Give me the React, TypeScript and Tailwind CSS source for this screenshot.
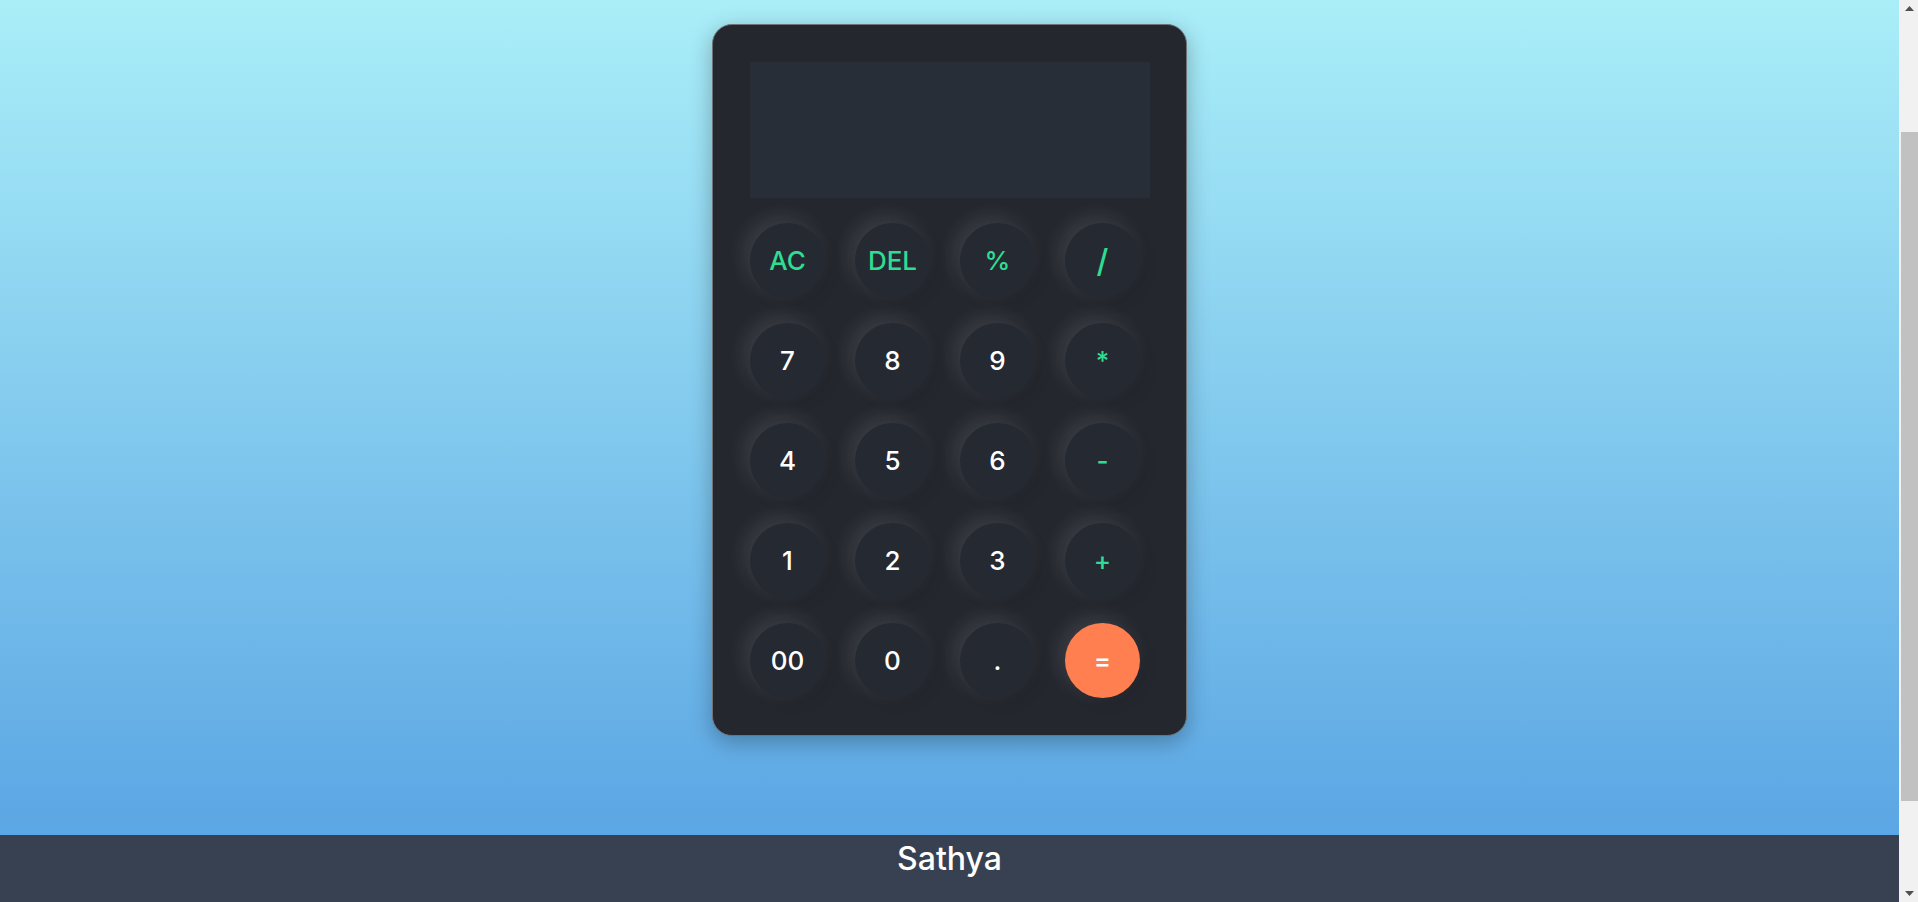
import React from "react";

const keys: { label: string; kind: "op" | "num" | "eq" }[] = [
  { label: "AC", kind: "op" },
  { label: "DEL", kind: "op" },
  { label: "%", kind: "op" },
  { label: "/", kind: "op" },
  { label: "7", kind: "num" },
  { label: "8", kind: "num" },
  { label: "9", kind: "num" },
  { label: "*", kind: "op" },
  { label: "4", kind: "num" },
  { label: "5", kind: "num" },
  { label: "6", kind: "num" },
  { label: "-", kind: "op" },
  { label: "1", kind: "num" },
  { label: "2", kind: "num" },
  { label: "3", kind: "num" },
  { label: "+", kind: "op" },
  { label: "00", kind: "num" },
  { label: "0", kind: "num" },
  { label: ".", kind: "num" },
  { label: "=", kind: "eq" },
];

function Key({ label, kind }: { label: string; kind: "op" | "num" | "eq" }) {
  const base =
    "w-[75px] h-[75px] rounded-full flex items-center justify-center text-[26px] font-medium leading-none shadow-[-6px_-6px_20px_rgba(255,255,255,0.11),5px_5px_15px_rgba(0,0,0,0.08)]";
  if (kind === "eq") {
    return <button className={`${base} bg-[#ff7f50] text-white`}>{label}</button>;
  }
  const extra = label === "/" ? "text-[32px]" : "";
  return (
    <button className={`${base} bg-[#252931] ${kind === "op" ? "text-[#2fdd92]" : "text-white"} ${extra}`}>
      {label}
    </button>
  );
}

function Scrollbar() {
  return (
    <div className="w-[19px] h-[902px] bg-[#f1f1f1] flex flex-col items-end shrink-0">
      <div className="w-[17px] h-[17px] flex items-center justify-center">
        <svg width="9" height="5" viewBox="0 0 9 5">
          <polygon points="0,5 4.5,0 9,5" fill="#505050" />
        </svg>
      </div>
      <div className="h-[115px]" />
      <div className="w-[17px] h-[669px] bg-[#c1c1c1]" />
      <div className="flex-1" />
      <div className="w-[17px] h-[17px] flex items-center justify-center">
        <svg width="9" height="5" viewBox="0 0 9 5">
          <polygon points="0,0 9,0 4.5,5" fill="#505050" />
        </svg>
      </div>
    </div>
  );
}

export default function App() {
  return (
    <div className="flex h-[902px] overflow-hidden font-['Inter','Noto_Sans',sans-serif]">
      <div className="flex-1 flex flex-col">
        <main className="h-[835px] bg-[linear-gradient(to_bottom,#aaeef8,#5ba6e4)] flex justify-center pt-[24px]">
          <div className="w-[475px] h-[712px] rounded-[20px] bg-[#24272e] border border-[#6e7378] shadow-[0_6px_22px_rgba(0,0,0,0.28)] p-[37px] flex flex-col gap-[25px]">
            <div className="w-[400px] h-[136px] bg-[#282e38]" />
            <div className="grid grid-cols-[repeat(4,75px)] gap-x-[30px] gap-y-[25px]">
              {keys.map((k) => (
                <Key key={k.label} label={k.label} kind={k.kind} />
              ))}
            </div>
          </div>
        </main>
        <footer className="h-[67px] bg-[#374151] pt-[4px] text-center">
          <p className="text-white text-[32px] leading-[40px] font-medium">Sathya</p>
        </footer>
      </div>
      <Scrollbar />
    </div>
  );
}
